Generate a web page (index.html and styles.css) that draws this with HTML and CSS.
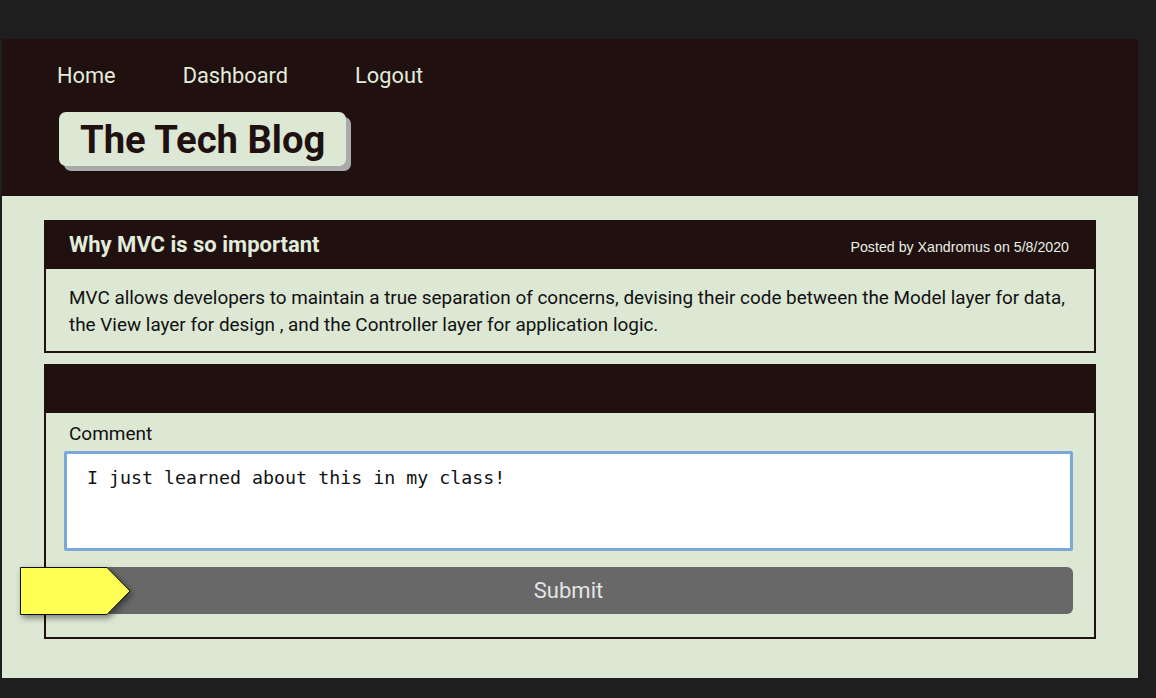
FILE: index.html
```html
<!DOCTYPE html>
<html lang="en">
<head>
<meta charset="utf-8">
<title>The Tech Blog</title>
<link rel="stylesheet" href="styles.css">
</head>
<body>
<div class="page">
  <header class="site-header">
    <nav class="nav">
      <a class="nav-link" href="#">Home</a>
      <a class="nav-link" href="#">Dashboard</a>
      <a class="nav-link" href="#">Logout</a>
    </nav>
    <h1 class="logo">The Tech Blog</h1>
  </header>
  <main class="main">
    <article class="card">
      <div class="card-head">
        <h2 class="card-title">Why MVC is so important</h2>
        <span class="card-meta">Posted by Xandromus on 5/8/2020</span>
      </div>
      <div class="card-body">
        <p class="post-text">MVC allows developers to maintain a true separation of concerns, devising their code between the Model layer for data, the View layer for design , and the Controller layer for application logic.</p>
      </div>
    </article>
    <section class="card comment-card">
      <div class="card-head"></div>
      <form class="comment-form">
        <label class="comment-label" for="comment">Comment</label>
        <textarea id="comment" class="comment-input">I just learned about this in my class!</textarea>
        <div class="submit-row">
          <button type="button" class="submit-btn">Submit</button>
          <svg class="pointer" width="118" height="56" viewBox="0 0 118 56" aria-hidden="true">
            <path d="M0.5 0.5 H87 L110 24 L87 47.5 H0.5 Z" fill="#ffff55" stroke="#111" stroke-width="1"/>
          </svg>
        </div>
      </form>
    </section>
  </main>
</div>
</body>
</html>
```
FILE: styles.css
```css
html, body {
  margin: 0;
  padding: 0;
}
body {
  background: #1e1e1e;
  padding: 39px 18px 21px 2px;
  font-family: Roboto, "Liberation Sans", sans-serif;
}
.page {
  background: #dce8d4;
}
.site-header {
  background: #201010;
  height: 157px;
  box-sizing: border-box;
  padding: 24px 0 0 55px;
}
.nav {
  display: flex;
  gap: 67px;
}
.nav-link {
  color: #e2ecda;
  text-decoration: none;
  font-size: 21.8px;
  line-height: 26px;
}
.logo {
  display: inline-block;
  margin: 23px 0 0 2px;
  padding: 0 21px;
  height: 54px;
  line-height: 57px;
  background: #dce8d4;
  color: #201010;
  font-size: 38.2px;
  font-weight: 700;
  border-radius: 7px;
  box-shadow: 5px 5px 0 #a9a9a9;
}
.main {
  padding: 24px 42px 39px;
  display: flex;
  flex-direction: column;
  gap: 11px;
}
.card {
  border: 2px solid #201010;
  border-top: 0;
  background: #dce8d4;
}
.card-head {
  background: #201010;
  height: 49px;
  box-sizing: border-box;
  display: flex;
  align-items: center;
  justify-content: space-between;
  padding: 0 25px 0 23px;
}
.card-title {
  margin: 0;
  color: #e2ecda;
  font-size: 22px;
  font-weight: 700;
}
.card-meta {
  color: #e8eee4;
  font-family: "Liberation Sans", Arial, sans-serif;
  font-size: 14.2px;
  padding-top: 5px;
}
.card-body {
  padding: 15px 23px 13px;
}
.post-text {
  margin: 0;
  font-size: 18.9px;
  line-height: 27px;
  color: #111;
}
.comment-form {
  display: flex;
  flex-direction: column;
  padding: 10px 21px 23px 18px;
}
.comment-label {
  margin-left: 5px;
  font-size: 19px;
  line-height: 22px;
  color: #111;
}
.comment-input {
  margin-top: 6px;
  height: 100px;
  box-sizing: border-box;
  border: 3px solid #7ba7d9;
  border-radius: 2px;
  background: #fff;
  padding: 13px 20px;
  font-family: "DejaVu Sans Mono", "Liberation Mono", monospace;
  font-size: 18.3px;
  line-height: 22px;
  color: #111;
  resize: none;
  outline: none;
}
.submit-row {
  position: relative;
  margin-top: 16px;
}
.submit-btn {
  display: block;
  width: 100%;
  height: 47px;
  border: 0;
  border-radius: 6px;
  background: #686868;
  color: #e4e4e4;
  font-family: Roboto, "Liberation Sans", sans-serif;
  font-size: 22px;
}
.pointer {
  position: absolute;
  left: -44px;
  top: 0;
  filter: drop-shadow(2px 3px 3px rgba(0, 0, 0, 0.45));
}
```
